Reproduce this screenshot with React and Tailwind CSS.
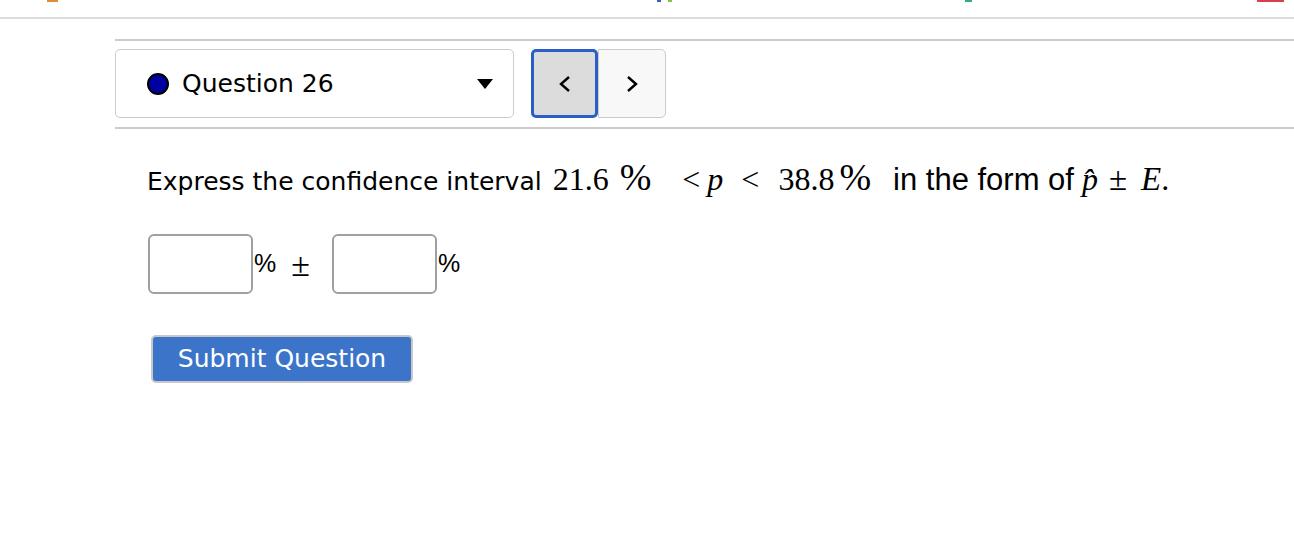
import React from 'react';

const sans = { fontFamily: '"DejaVu Sans", Tahoma, sans-serif' };

const M = ({ children, className = '' }) => (
  <span className={`font-['Liberation_Serif',serif] ${className}`}>{children}</span>
);

export default function App() {
  return (
    <div className="w-[1294px] h-[555px] bg-white overflow-hidden text-black" style={sans}>
      {/* cropped toolbar icons at the very top */}
      <div className="relative h-[17px]">
        <span className="absolute left-[47px] top-0 w-[11px] h-[2px] bg-[#e08a3c]" />
        <span className="absolute left-[657px] top-0 w-[4px] h-[2px] bg-[#3a5fb0]" />
        <span className="absolute left-[668px] top-0 w-[4px] h-[2px] bg-[#8cc04c]" />
        <span className="absolute left-[965px] top-0 w-[7px] h-[2px] bg-[#3aa88a]" />
        <span className="absolute left-[1257px] top-0 w-[27px] h-[2px] bg-[#d9404a]" />
      </div>
      <div className="h-[2px] bg-[#dcdcdc]" />

      <div className="pl-[115px] pt-[20px]">
        {/* question navigator */}
        <div className="border-t-2 border-b-2 border-[#cccccc] pt-[8px] pb-[9px] flex items-center">
          <div className="w-[399px] h-[69px] border border-[#cccccc] rounded-[5px] flex items-center pl-[31px] pr-[20px]">
            <span className="w-[22px] h-[22px] rounded-full bg-[#0000a0] border-2 border-black" />
            <span className="ml-[13px] text-[25px]">Question 26</span>
            <span className="ml-auto w-0 h-0 border-l-[8px] border-r-[8px] border-t-[10px] border-l-transparent border-r-transparent border-t-black" />
          </div>
          <div className="flex ml-[17px]">
            <button className="w-[67px] h-[69px] bg-[#dcdcdc] border-[3px] border-[#2a5fc7] rounded-[5px] flex items-center justify-center">
              <svg width="14" height="20" viewBox="0 0 14 20" fill="none" stroke="black" strokeWidth="2.4">
                <path d="M11 3 L3 10 L11 17" />
              </svg>
            </button>
            <button className="w-[68px] h-[69px] bg-[#f8f8f8] border border-[#cccccc] rounded-r-[5px] flex items-center justify-center">
              <svg width="14" height="20" viewBox="0 0 14 20" fill="none" stroke="black" strokeWidth="2.4">
                <path d="M3 3 L11 10 L3 17" />
              </svg>
            </button>
          </div>
        </div>

        {/* question body */}
        <div className="pl-[32px] pt-[30px]">
          <p className="text-[25px] leading-[36px] whitespace-nowrap">
            Express the confidence interval
            <M className="text-[32px] ml-[11px]">21.6</M>
            <M className="text-[38px] ml-[11px]">%</M>
            <M className="text-[32px] ml-[31px]">&lt;</M>
            <M className="text-[32px] ml-[7px] italic">p</M>
            <M className="text-[32px] ml-[18px]">&lt;</M>
            <M className="text-[32px] ml-[19px]">38.8</M>
            <M className="text-[38px] ml-[5px]">%</M>
            <span className="font-['Liberation_Sans',sans-serif] text-[31px] ml-[22px]">in the form of</span>
            <M className="text-[32px] ml-[8px] italic">p&#770;</M>
            <M className="text-[33px] ml-[11px]">±</M>
            <M className="text-[33px] ml-[14px] italic">E</M>
            <M className="text-[32px]">.</M>
          </p>

          <div className="flex items-center mt-[34px] pl-[1px]">
            <input className="w-[105px] h-[60px] border-2 border-[#a0a0a0] rounded-[6px] outline-none" />
            <span className="text-[25px] font-['Liberation_Sans',sans-serif] ml-[1px]">%</span>
            <span className="text-[34px] font-['Liberation_Serif',serif] ml-[15px]">±</span>
            <input className="w-[105px] h-[60px] border-2 border-[#a0a0a0] rounded-[6px] outline-none ml-[22px]" />
            <span className="text-[25px] font-['Liberation_Sans',sans-serif] ml-[1px]">%</span>
          </div>

          <button className="mt-[41px] ml-[4px] w-[262px] h-[48px] bg-[#3b74c9] border-2 border-[#c8c8c8] rounded-[5px] text-white text-[25px]">
            Submit Question
          </button>
        </div>
      </div>
    </div>
  );
}
